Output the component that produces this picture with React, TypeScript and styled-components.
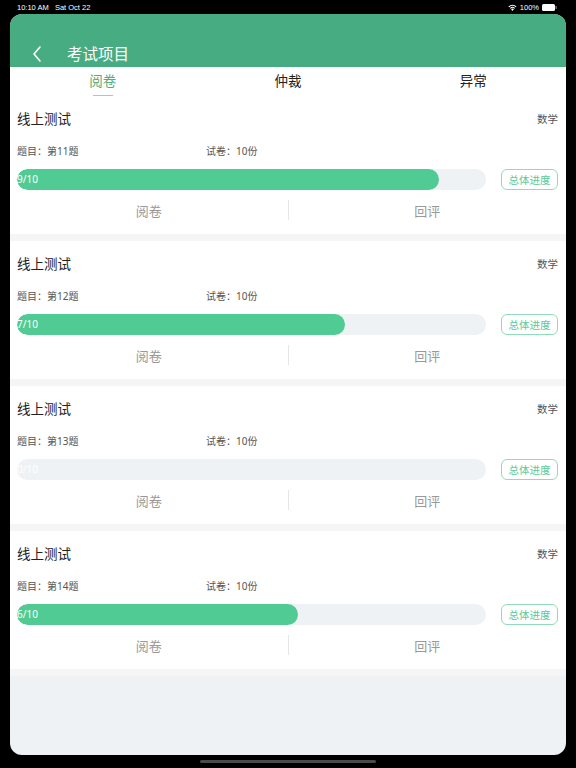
import { createGlobalStyle, styled } from "styled-components";

const GlobalStyle = createGlobalStyle`
  html, body {
    margin: 0;
    padding: 0;
    background: #000;
    font-family: "Noto Sans", "Noto Sans CJK SC", sans-serif;
  }
`;

const Page = styled.div`
  width: 576px;
  height: 768px;
  background: #000;
  display: flex;
  flex-direction: column;
  overflow: hidden;
`;

const StatusBar = styled.div`
  height: 14px;
  display: flex;
  align-items: center;
  justify-content: space-between;
  padding: 0 19px 0 17px;
  color: #fff;
  font-size: 7.5px;
  font-family: "Liberation Sans", sans-serif;
`;

const StatusRight = styled.div`
  display: flex;
  align-items: center;
  gap: 3px;
`;

const Screen = styled.div`
  margin: 0 10px;
  height: 741px;
  border-radius: 12px;
  overflow: hidden;
  background: #eef2f5;
  display: flex;
  flex-direction: column;
`;

const Header = styled.div`
  height: 53px;
  background: #48ac82;
  display: flex;
  align-items: flex-end;
  padding: 0 0 3px 22px;
  box-sizing: border-box;
  gap: 25px;
  color: #fff;
`;

const Title = styled.div`
  font-size: 15.5px;
  line-height: 20px;
`;

const Tabs = styled.div`
  height: 29px;
  background: #fff;
  display: grid;
  grid-template-columns: repeat(3, 1fr);
`;

const Tab = styled.div<{ $active?: boolean }>`
  display: flex;
  flex-direction: column;
  align-items: center;
  padding-top: 5px;
  font-size: 13.5px;
  line-height: 18px;
  color: ${(p) => (p.$active ? "#4fae7c" : "#222")};

  &::after {
    content: "";
    margin-top: 5px;
    width: 20px;
    height: 2px;
    background: ${(p) => (p.$active ? "#9ad3b4" : "transparent")};
  }
`;

const List = styled.div`
  display: flex;
  flex-direction: column;
`;

const Card = styled.div`
  height: 138px;
  background: #fff;
  border-bottom: 7px solid #f5f5f5;
  padding: 0 8px 0 7px;
  display: flex;
  flex-direction: column;
`;

const TitleRow = styled.div`
  height: 44px;
  display: flex;
  align-items: center;
  justify-content: space-between;
`;

const CardTitle = styled.div`
  font-size: 13.5px;
  color: #222;
`;

const Subject = styled.div`
  font-size: 10.5px;
  color: #555;
`;

const MetaRow = styled.div`
  height: 20px;
  display: grid;
  grid-template-columns: 189px 1fr;
  align-items: center;
  font-size: 10px;
  color: #555;
`;

const BarRow = styled.div`
  margin-top: 9px;
  height: 21px;
  display: flex;
  align-items: center;
  gap: 15px;
`;

const Track = styled.div`
  position: relative;
  width: 469px;
  height: 21px;
  border-radius: 11px;
  background: #eef2f5;
  overflow: hidden;
`;

const Fill = styled.div`
  height: 100%;
  border-radius: 11px;
  background: #50cb93;
`;

const BarLabel = styled.span`
  position: absolute;
  left: 0;
  top: 0;
  line-height: 21px;
  font-size: 10px;
  color: #fff;
`;

const ProgressButton = styled.button`
  width: 57px;
  height: 21px;
  padding: 0;
  border: 1px solid #8fdcb8;
  border-radius: 6px;
  background: #fff;
  color: #5bc99a;
  font-size: 10.5px;
  font-family: inherit;
`;

const Actions = styled.div`
  margin: 10px -8px 0 -7px;
  height: 20px;
  display: flex;
  align-items: center;
`;

const Action = styled.div`
  flex: 1;
  text-align: center;
  font-size: 13px;
  color: #999;
`;

const Divider = styled.div`
  width: 1px;
  height: 20px;
  background: #e6e6e6;
`;

const HomeBar = styled.div`
  margin: 5px auto 0;
  width: 176px;
  height: 3px;
  border-radius: 2px;
  background: #4a4a4a;
`;

const items = [
  { q: 11, done: 9 },
  { q: 12, done: 7 },
  { q: 13, done: 0 },
  { q: 14, done: 6 },
];

export default function App() {
  return (
    <Page>
      <GlobalStyle />
      <StatusBar>
        <span>10:10 AM&nbsp;&nbsp; Sat Oct 22</span>
        <StatusRight>
          <svg width="9" height="7" viewBox="0 0 12 9" fill="#fff">
            <path d="M6 9 L4 6.6 A3 3 0 0 1 8 6.6 Z" />
            <path d="M2.6 5 A5 5 0 0 1 9.4 5 L8.5 6 A3.7 3.7 0 0 0 3.5 6 Z" />
            <path d="M0.6 3 A8 8 0 0 1 11.4 3 L10.4 4 A6.6 6.6 0 0 0 1.6 4 Z" />
          </svg>
          <span>100%</span>
          <svg width="15" height="7" viewBox="0 0 15 7">
            <rect x="0" y="0" width="13" height="7" rx="1.5" fill="#fff" />
            <rect x="13.5" y="2" width="1.2" height="3" rx="0.5" fill="#888" />
          </svg>
        </StatusRight>
      </StatusBar>
      <Screen>
        <Header>
          <svg width="10" height="20" viewBox="0 0 10 20" fill="none">
            <path d="M8 3 L2 10 L8 17" stroke="#fff" strokeWidth="1.6" strokeLinecap="round" strokeLinejoin="round" />
          </svg>
          <Title>考试项目</Title>
        </Header>
        <Tabs>
          <Tab $active>阅卷</Tab>
          <Tab>仲裁</Tab>
          <Tab>异常</Tab>
        </Tabs>
        <List>
          {items.map((it) => (
            <Card key={it.q}>
              <TitleRow>
                <CardTitle>线上测试</CardTitle>
                <Subject>数学</Subject>
              </TitleRow>
              <MetaRow>
                <span>题目：第{it.q}题</span>
                <span>试卷：10份</span>
              </MetaRow>
              <BarRow>
                <Track>
                  <Fill style={{ width: `${it.done * 10}%` }} />
                  <BarLabel>{it.done}/10</BarLabel>
                </Track>
                <ProgressButton>总体进度</ProgressButton>
              </BarRow>
              <Actions>
                <Action>阅卷</Action>
                <Divider />
                <Action>回评</Action>
              </Actions>
            </Card>
          ))}
        </List>
      </Screen>
      <HomeBar />
    </Page>
  );
}
